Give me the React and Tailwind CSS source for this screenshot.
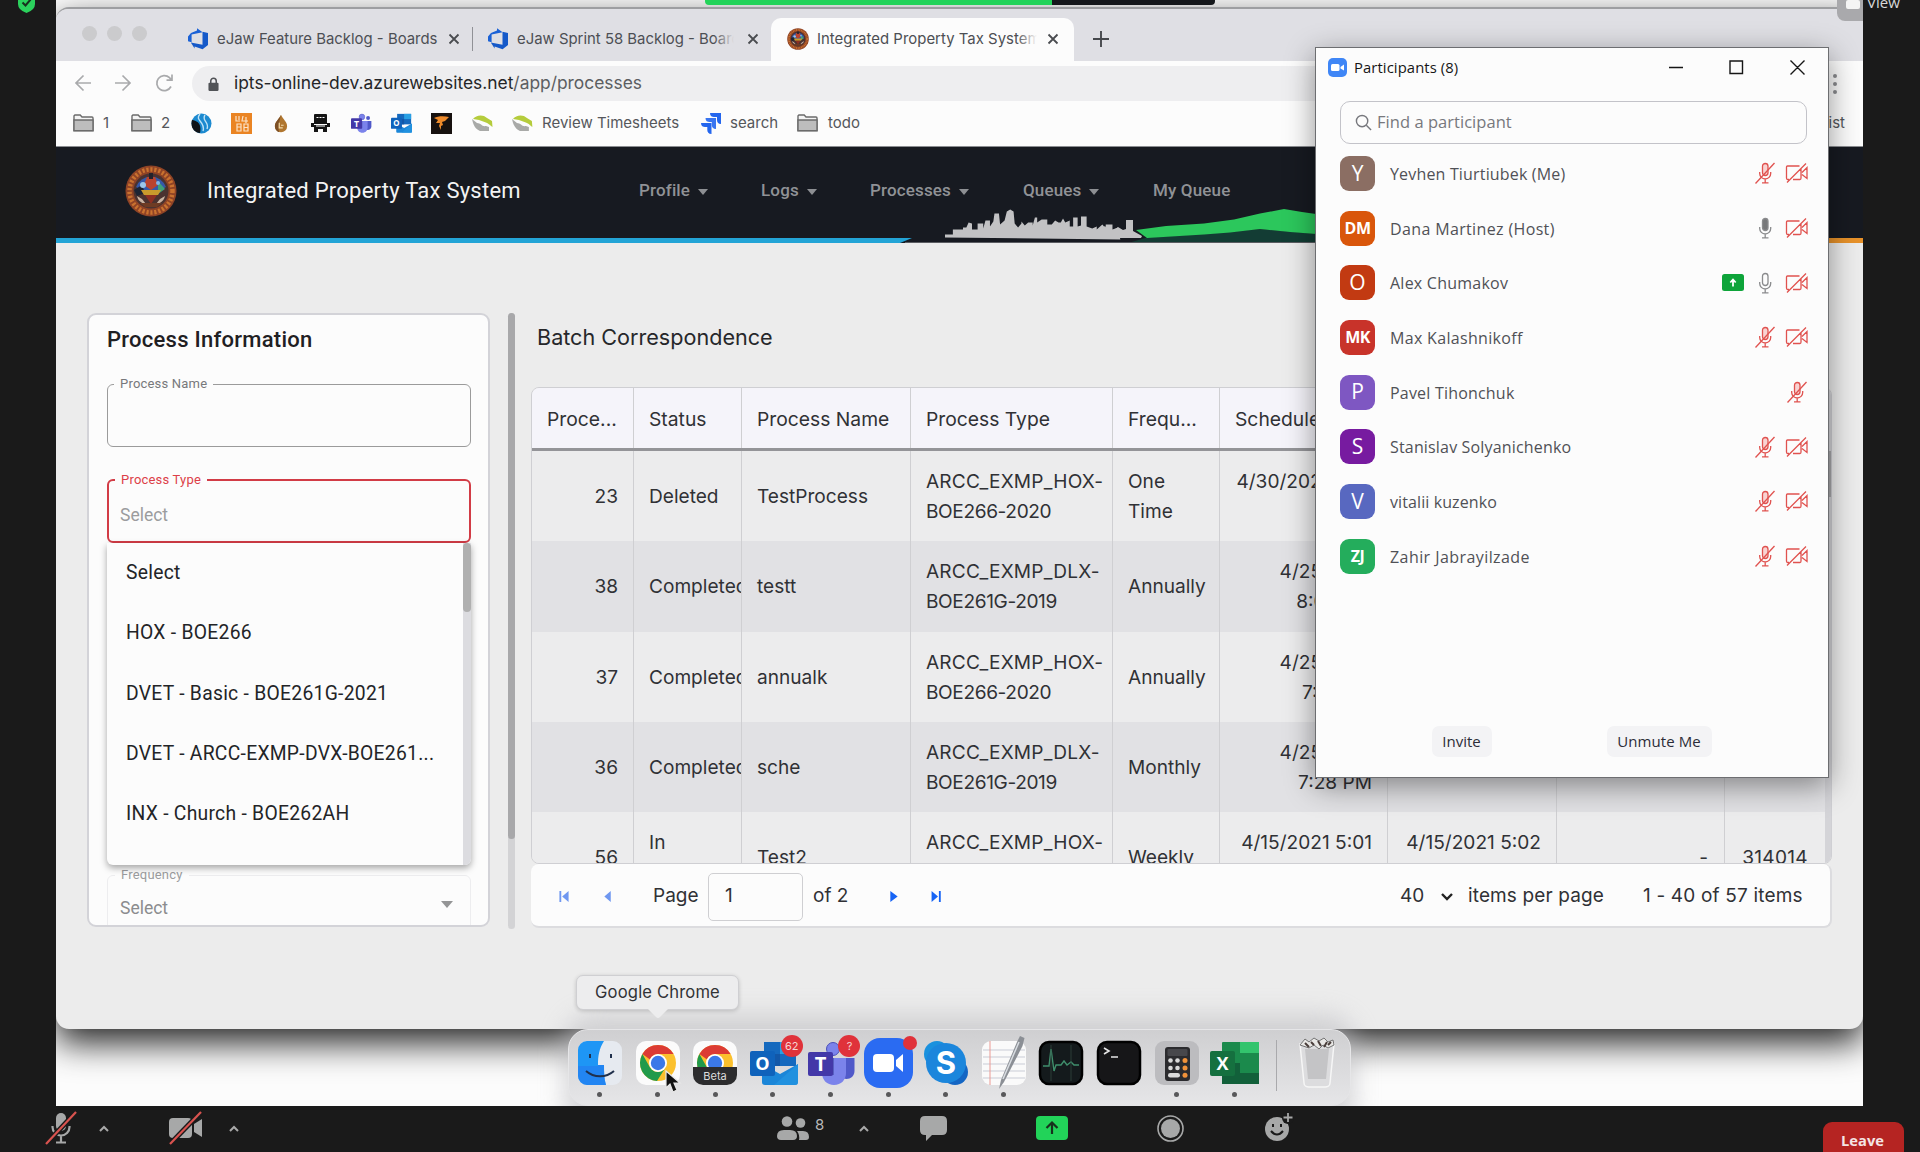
import React from "react";

/* ---------- small shared icons ---------- */

const Folder = () => (
  <svg width="21" height="18" viewBox="0 0 21 18">
    <path d="M1 16.5V2.200C1 1.500 1.400 1 2 1h5.200l1.800 2h10c.6 0 1 .5 1 1v12.500z" fill="#f4f4f4" stroke="#6b6b6b" strokeWidth="1.400" />
    <path d="M1 6h19v10.700H1z" fill="#bdbdbd" stroke="#6b6b6b" strokeWidth="1.400" />
  </svg>
);

const DevOps = () => (
  <svg width="22" height="22" viewBox="0 0 22 22">
    <path d="M1 8.500 4 5l6-2.600V.3l5.600 4-11 2.200v7.800L1 13.200z" fill="#1b62d6" />
    <path d="M15.500 3.800 21 5v12l-5.400 4.200-8-2.700v2L3.800 14.600l11.700 2.200z" fill="#1559c9" />
  </svg>
);

const CloseX = () => (
  <svg width="12" height="12" viewBox="0 0 12 12" stroke="#4a4c50" strokeWidth="1.800">
    <path d="M1.500 1.500l9 9M10.500 1.500l-9 9" />
  </svg>
);

const Seal = ({ size }) => (
  <svg width={size} height={size} viewBox="0 0 52 52">
    <circle cx="26" cy="26" r="25.500" fill="#8f4326" />
    <circle cx="26" cy="26" r="21.500" fill="none" stroke="#c9722f" strokeWidth="4.500" strokeDasharray="2.200 1.800" />
    <circle cx="26" cy="26" r="17.500" fill="#4a3230" />
    <path d="M11 22a16 16 0 0 1 30 0l-7 4H18z" fill="#3558a8" />
    <path d="M33 16l7 8-7 5z" fill="#3fa07a" />
    <path d="M9 25l8-5 3 8-8 3z" fill="#1c2434" />
    <path d="M22 12h8l3 8-7 5-7-5z" fill="#b9432f" />
    <path d="M24 8h4v6h-4z" fill="#23222c" />
    <path d="M16 25h20l-3 5H19z" fill="#c99a2c" />
    <path d="M12 31c2 12 26 12 28 0l-5 3-4 5h-10l-4-5z" fill="#c9b3a2" />
    <path d="M20 30h12l-6 9z" fill="#8d2f22" />
    <circle cx="18" cy="20" r="3" fill="#9cc6ea" />
    <circle cx="33" cy="18" r="2" fill="#7fb2e8" />
    <path d="M15 38h22l-5 4H20z" fill="#6e3b24" />
  </svg>
);

const Leaf = () => (
  <svg width="22" height="18" viewBox="0 0 22 18">
    <path d="M2 5c3-4 10-5 14-1l5 3 .5 6c-3-2-4-4-8-5L8 6z" fill="#b5cc3c" />
    <path d="M1 5l5 4c4 0 5 4 9 3l3 1 0 4H9C4 15 2 10 1 5z" fill="#a9aaa8" />
  </svg>
);

const TeamsIcon = ({ size }) => (
  <svg width={size} height={size} viewBox="0 0 48 44">
    <circle cx="25" cy="7" r="6.500" fill="#7b83eb" stroke="#4a4fb8" />
    <circle cx="39" cy="9.500" r="4.500" fill="#5059c9" />
    <path d="M32 16h14.500v13c0 5-4 8-8 8s-7-3-7-8z" fill="#5059c9" />
    <path d="M14 16h24v15c0 7-5 12-12 12s-12-5-12-12z" fill="#7b83eb" />
    <path d="M14 16h12v17H16z" fill="#4a50b0" opacity=".7" />
    <rect x="0" y="10" width="25" height="24" rx="2" fill="#4338a8" />
    <text x="12.500" y="29" fontSize="20" fontWeight="700" fill="#fff" textAnchor="middle" fontFamily="Open Sans, sans-serif">T</text>
  </svg>
);

const OutlookIcon = ({ size }) => (
  <svg width={size} height={size} viewBox="0 0 48 44">
    <rect x="14" y="0" width="32" height="24" fill="#1569be" />
    <rect x="30" y="0" width="16" height="12" fill="#28a0e4" />
    <rect x="14" y="12" width="16" height="12" fill="#1257a8" />
    <path d="M12 22l18 10 18-10v18c0 2-1 3-3 3H15c-2 0-3-1-3-3z" fill="#1b86d8" />
    <path d="M48 22v18c0 2-1 3-3 3H24z" fill="#2396e2" opacity=".7" />
    <rect x="0" y="9" width="25" height="25" rx="2" fill="#0f62bb" />
    <text x="12.500" y="28" fontSize="18" fontWeight="700" fill="#fff" textAnchor="middle" fontFamily="Open Sans, sans-serif">O</text>
  </svg>
);

const Jira = () => (
  <svg width="22" height="22" viewBox="0 0 22 22" fill="#2466ee">
    <path d="M10 1h11v11c-3 0-4-2-4-4V5h-3c-2 0-4-1-4-4z" />
    <path d="M5.500 6h10.500v11c-3 0-4.200-2-4.200-4v-3H9.500c-2 0-4-1-4-4z" opacity=".9" />
    <path d="M1 11h10.500v11c-3 0-4.200-2-4.200-4v-3H5c-2 0-4-1-4-4z" />
  </svg>
);

const CaretDown = () => (
  <svg width="10" height="6" viewBox="0 0 10 6"><path d="M0 0h10L5 6z" fill="#8d8f93" /></svg>
);

/* ---------- browser ---------- */

function TabStrip() {
  return (
    <div className="flex h-[52px] items-center bg-[#dfdfe4] text-[14.900px] text-[#4d4f54]">
      <div className="ml-[26px] flex w-[103px] gap-[10px] pb-[3px]">
        {[0, 1, 2].map((i) => (
          <span key={i} className="size-[15px] rounded-full bg-[#cbcbcd]" />
        ))}
      </div>
      <div className="flex w-[288px] items-center pl-[2px] pt-2">
        <DevOps />
        <span className="ml-[8px] w-[231px] whitespace-nowrap">eJaw Feature Backlog - Boards</span>
        <CloseX />
        <span className="ml-[12px] h-6 w-px bg-[#909196]" />
      </div>
      <div className="flex w-[298px] items-center pl-[14px] pt-2">
        <DevOps />
        <span className="relative ml-[8px] w-[217px] overflow-hidden whitespace-nowrap">
          eJaw Sprint 58 Backlog - Boards
          <span className="absolute inset-y-0 right-0 w-5 bg-gradient-to-r from-transparent to-[#dfdfe4]" />
        </span>
        <span className="ml-[13px]"><CloseX /></span>
      </div>
      <div className="flex h-[43px] w-[303px] items-center self-end rounded-t-[10px] bg-[#fcfcfc] pb-px pl-[16px]">
        <Seal size={22} />
        <span className="relative ml-[8px] w-[220px] overflow-hidden whitespace-nowrap tracking-[0.03px]">
          Integrated Property Tax System
          <span className="absolute inset-y-0 right-0 w-5 bg-gradient-to-r from-transparent to-[#fcfcfc]" />
        </span>
        <span className="ml-[10px]"><CloseX /></span>
      </div>
      <svg className="ml-[19px] mt-2" width="16" height="16" viewBox="0 0 16 16" stroke="#46484c" strokeWidth="1.900"><path d="M8 0v16M0 8h16" /></svg>
    </div>
  );
}

function AddressBar() {
  return (
    <div className="flex h-[45px] items-center bg-[#fcfcfc]">
      <svg className="-mt-px ml-[18px]" width="103" height="20" viewBox="0 0 103 20" fill="none" stroke="#a9aaac" strokeWidth="1.700">
        <path d="M17 10H2M9.500 2.500 2 10l7.500 7.500" />
        <path d="M41 10h15M48.500 2.500 56 10l-7.500 7.500" />
        <path d="M97 13.500A7.500 7.500 0 1 1 95.500 4.700l2 2.300M98 1.500v5.700h-5.500" />
      </svg>
      <div className="ml-[15px] flex h-[35px] flex-1 items-center rounded-l-full bg-[#eeeef0] pl-[16px]">
        <svg width="11" height="14" viewBox="0 0 12 15"><path d="M3 7V4.200a3 3 0 0 1 6 0V7" fill="none" stroke="#515357" strokeWidth="1.700" /><rect x=".5" y="6" width="11" height="9" rx="1.300" fill="#515357" /></svg>
        <span className="ml-[15px] whitespace-nowrap text-[17.400px] text-[#242527]">
          ipts-online-dev.azurewebsites.net<span className="text-[#5c5e62]">/app/processes</span>
        </span>
      </div>
      <div className="flex w-[43px] flex-col items-center gap-[4px] pr-[14px]">
        {[0, 1, 2].map((i) => <span key={i} className="size-[4px] rounded-full bg-[#8b8c8f]" />)}
      </div>
    </div>
  );
}

function Bookmarks() {
  return (
    <div className="flex h-[41px] items-center border-b border-[#8b8d91] bg-[#fcfcfc] pb-[6px] pl-[17px] text-[15px] text-[#55575b]">
      <Folder /><span className="ml-[9px] w-[28px]">1</span>
      <Folder /><span className="ml-[9px] w-[30px]">2</span>
      <div className="flex w-[342px] items-center">
        <span className="w-[40px]">
          <svg width="21" height="21" viewBox="0 0 21 21"><circle cx="10.500" cy="10.500" r="10" fill="#1c8ad0" /><path d="M1 7c5 1 10 3 8 13C3 20-1 14 1 7z" fill="#101418" /><path d="M9 1C3 8 15 8 12 18M14 2c-4 6 5 7 2 14" stroke="#bfe2f6" strokeWidth="1.400" fill="none" /></svg>
        </span>
        <span className="w-[43px]">
          <svg width="21" height="21" viewBox="0 0 21 21"><rect width="21" height="21" fill="#ea8423" /><g fill="none" stroke="#fbe3c8" strokeWidth="1.200"><path d="M5 3v5h4M8 3v4M12 3l-1 5h6M15 4v6M6 11h4v7H6zM6 14h4M13 11h4v7h-4zM13 14.500h4" /></g></svg>
        </span>
        <span className="w-[37px]">
          <svg width="14" height="19" viewBox="0 0 16 20"><path d="M8 0c2 5 7 8 7 13a7 7 0 0 1-14 0C1 8 6 5 8 0z" fill="#b0762f" /><path d="M8 0c-2 5-7 8-7 13 0 3 2 6 5 7C4 14 6 8 8 0z" fill="#7d5026" /><path d="M6 9v6h4M8 12h3" stroke="#f2dcae" strokeWidth="1.300" fill="none" /></svg>
        </span>
        <span className="w-[41px]">
          <svg width="21" height="20" viewBox="0 0 21 20" fill="#151515"><path d="M4 2q0-1 1-1h11q1 0 1 1v9H4z" /><path d="M1 10h3v2h13v-2h3v4h-3v5h-4v-3H8v3H4v-5H1z" /><path d="M6.500 4.500h2M9.500 4.500h2M12.500 4.500h2M6 13h9" stroke="#fff" /></svg>
        </span>
        <span className="w-[40px]"><TeamsIcon size={21} /></span>
        <span className="w-[40px]"><OutlookIcon size={21} /></span>
        <span className="w-[41px]">
          <svg width="21" height="21" viewBox="0 0 21 21"><rect width="21" height="21" fill="#17110f" /><path d="M3 5c4-2 10-2 15-1l-4 4-3 1 1 3-2 1 0 4-2-4 1-3-4 0 2-3z" fill="#ee8a2a" /></svg>
        </span>
        <span className="w-[40px]"><Leaf /></span>
        <Leaf />
      </div>
      <span className="ml-[9px] w-[158px] whitespace-nowrap">Review Timesheets</span>
      <Jira /><span className="ml-[8px] w-[67px]">search</span>
      <Folder /><span className="ml-[10px]">todo</span>
      <span className="ml-auto mr-[18px]">Reading list</span>
    </div>
  );
}

const NAV = [
  ["Profile", "w-[122px]", true],
  ["Logs", "w-[109px]", true],
  ["Processes", "w-[153px]", true],
  ["Queues", "w-[130px]", true],
  ["My Queue", "w-[100px]", false],
];

function SiteHeader() {
  return (
    <div className="relative flex h-[96px] items-start bg-[#171a21] font-['Roboto',sans-serif]">
      <div className="flex h-[88px] items-center pl-[69px]">
        <Seal size={52} />
        <span className="ml-[30px] w-[432px] whitespace-nowrap pb-[2px] text-[22px] tracking-[0.240px] text-[#f3f3f3]">Integrated Property Tax System</span>
        {NAV.map(([label, w, caret]) => (
          <span key={label} className={`flex items-center whitespace-nowrap text-[17px] font-medium tracking-[0.150px] text-[#909296] ${w}`}>
            {label}
            {caret && <span className="ml-[8px] pt-0.5"><CaretDown /></span>}
          </span>
        ))}
      </div>
      <svg className="absolute bottom-0 left-0" width="1807" height="36" viewBox="56 206 1807 36">
        <path d="M56 237H912l-12 5H56z" fill="#23a4d6" />
        <path d="M1128 242l19-5.500 57-3.500 56-5 56 5v9z" fill="#133c34" />
        <path d="M1136 229l30-4 38-2.500 30-4 26-6 24-4.500 18 3 14 2v20l-26-2-30-3-30 3.500-26 2-57 3.500z" fill="#2cc75c" />
        <g transform="translate(945 0) scale(1.124 1) translate(-945 0)">
          <path d="M945 236.500v-3h7v-5h9v-2h3l2-5 3 1v6h5v-6h5v5l2-8h4v6l3-5 1-8h4l1 11 4-4 2-9 3-2 3 2 1 12 3 4 3-4v-2l3 4 3-3h4v3l2-8h2v5l4-3h5v5h4l3-4 3 2h2l2-4 2 4 4-2v6h3v-9h4v9l3-1v-9h5v10l5 2 4-2v3l5-5 3 4v-4h6v5l5-2v3l2 9z" fill="#c2c2c4" />
        </g>
        <path d="M1100 237v-8l5-4 3 4h6l4-3 5 3 3-1v-9h7v11l9 5-1 2z" fill="#c2c2c4" />
        <path d="M1800 237h63v5h-63z" fill="#e8922a" />
        <path d="M905 241h895v1H905z" fill="#5b5d62" />
      </svg>
    </div>
  );
}

/* ---------- process form ---------- */

const OPTIONS = ["Select", "HOX - BOE266", "DVET - Basic - BOE261G-2021", "DVET - ARCC-EXMP-DVX-BOE261...", "INX - Church - BOE262AH"];

function ProcessForm() {
  return (
    <div className="relative h-[614px] w-[403px] overflow-hidden rounded-[9px] border-2 border-[#d3d3d8] bg-[#fcfcfc] pl-[18px] font-['Roboto',sans-serif]">
      <h2 className="mt-[9px] h-[32px] whitespace-nowrap text-[22px] font-medium leading-[32px] tracking-[0.260px] text-[#1f2023]">Process Information</h2>
      <fieldset className="mt-[20px] h-[71px] w-[364px] rounded-[6px] border-[1.500px] border-[#9b9b9b] pl-[6px]">
        <legend className="px-[6px] text-[13px] leading-[16px] tracking-[0.200px] text-[#77787b]">Process Name</legend>
      </fieldset>
      <fieldset className="mt-[25px] h-[71px] w-[364px] rounded-[6px] border-2 border-[#d23c46] pl-[6px]">
        <legend className="px-[6px] text-[13px] leading-[16px] tracking-[0.200px] text-[#dc3f48]">Process Type</legend>
        <div className="pl-[5px] pt-[15px] text-[17.500px] leading-[24px] text-[#9b9c9e]">Select</div>
      </fieldset>
      <fieldset className="mt-[324px] h-[90px] w-[364px] rounded-[6px] border border-[#ededef] pl-[7px]">
        <legend className="px-[6px] text-[13px] leading-[16px] tracking-[0.200px] text-[#9b9c9e]">Frequency</legend>
        <div className="flex items-center pl-[5px] pr-[17px] pt-[13px] text-[17.500px] leading-[24px] text-[#8b8c8e]">
          <span className="flex-1">Select</span>
          <span className="pb-2"><svg width="12" height="7" viewBox="0 0 12 7"><path d="M0 0h12L6 7z" fill="#949596" /></svg></span>
        </div>
      </fieldset>
      <ul className="absolute left-[18px] top-[228px] flex h-[322px] w-[364px] flex-col rounded-b-[6px] bg-[#fcfcfc] pl-[19px] shadow-[0_3px_7px_rgba(0,0,0,0.35)]">
        {OPTIONS.map((o) => (
          <li key={o} className="h-[60.300px] w-[325px] whitespace-nowrap text-[19.300px] leading-[60px] tracking-[0.280px] text-[#232427]">{o}</li>
        ))}
        <span className="absolute right-0 top-0 flex h-full w-[8px] rounded-br-[6px] bg-[#dcdce0]">
          <span className="h-[69px] w-full rounded-[4px] bg-[#b0b0b0]" />
        </span>
      </ul>
    </div>
  );
}

/* ---------- data grid ---------- */

const ROWS = [
  ["23", "Deleted", "TestProcess", ["HOX-", "BOE266-2020"], "One\nTime", "4/30/2021 5:14\n\u00a0"],
  ["38", "Completed", "testt", ["DLX-", "BOE261G-2019"], "Annually", "4/25/2021\n8:02 PM"],
  ["37", "Completed", "annualk", ["HOX-", "BOE266-2020"], "Annually", "4/25/2021\n7:31 PM"],
  ["36", "Completed", "sche", ["DLX-", "BOE261G-2019"], "Monthly", "4/25/2021\n7:28 PM"],
  ["56", "In\nProgress", "Test2", ["HOX-", "BOE266-2020"], "Weekly", "4/15/2021 5:01\nPM", "4/15/2021 5:02\nPM", "-", "314014"],
];
const COLS = "grid grid-cols-[102px_108px_169px_202px_107px_168px_169px_168px_100px]";
const CELL = "flex min-w-0 items-center overflow-hidden whitespace-pre border-r border-[#cfcfd2] pl-[15px]";
const HEADS = ["Proce...", "Status", "Process Name", "Process Type", "Frequ...", "Schedule Date", "Start Date", "End Date", "Count"];

function Grid() {
  return (
    <div className="flex h-[477px] w-[1301px] overflow-hidden rounded-[8px] border border-[#cfcfd3] text-[19.100px] text-[#303135]">
      <div className="w-[1293px]">
        <div className={`${COLS} h-[63px] border-b-[3px] border-[#949498] bg-[#f5f4fa] text-[19.300px]`}>
          {HEADS.map((h) => <div key={h} className={`${CELL} pt-[2px]`}>{h}</div>)}
        </div>
        {ROWS.map((r, i) => (
          <div key={i} className={`${COLS} h-[90.300px] leading-[30px] ${i % 2 ? "bg-[#e1e1e4]" : "bg-[#ececed]"}`}>
            <div className={`${CELL} justify-end pr-[15px]`}>{r[0]}</div>
            <div className={CELL}>{r[1]}</div>
            <div className={CELL}>{r[2]}</div>
            <div className={CELL}>
              <div>
                <div className="tracking-[0.200px]">{"ARCC_EXMP_" + r[3][0]}</div>
                <div className="tracking-[-0.380px]">{r[3][1]}</div>
              </div>
            </div>
            <div className={CELL}>{r[4]}</div>
            <div className={`${CELL} justify-end pr-[15px] text-right`}>{r[5]}</div>
            <div className={`${CELL} justify-end pr-[15px] text-right`}>{r[6]}</div>
            <div className={`${CELL} justify-end pr-[16px]`}>{r[7]}</div>
            <div className="flex items-center justify-end pr-[17px] tracking-[0.300px]">{r[8]}</div>
          </div>
        ))}
      </div>
      <div className="flex-1 bg-[#d4d4d8] pt-[63px]"><div className="h-[46px] bg-[#a9a9ab]" /></div>
    </div>
  );
}

function Pager() {
  return (
    <div className="flex h-[64px] w-[1301px] items-center rounded-[8px] border-b-2 border-r-2 border-[#dcdcdf] bg-[#fcfcfc] pt-[3px] text-[19px] text-[#303135]">
      <svg className="ml-[26px]" width="58" height="11" viewBox="0 0 58 12" fill="#6f97f0"><path d="M0 0h2v12H0zM10 0v12L3 6zM56 0v12l-7-6z" /></svg>
      <span className="ml-[38px] w-[55px]">Page</span>
      <span className="flex h-[48px] w-[95px] items-center rounded-[5px] border border-[#cfcfd2] pl-[16px]">1</span>
      <span className="ml-[10px] w-[75px]">of 2</span>
      <svg width="56" height="11" viewBox="0 0 56 12" fill="#1764f5"><path d="M0 0v12l8-6zM45 0v12l7-6zM53 0h2v12h-2z" /></svg>
      <span className="ml-auto w-[41px]">40</span>
      <svg width="12" height="8" viewBox="0 0 12 8" fill="none" stroke="#222" strokeWidth="2.400"><path d="M1 1l5 5 5-5" /></svg>
      <span className="ml-[15px] w-[175px] whitespace-nowrap tracking-[0.130px]">items per page</span>
      <span className="w-[187px] whitespace-nowrap tracking-[0.180px]">1 - 40 of 57 items</span>
    </div>
  );
}

/* ---------- participants ---------- */

const PEOPLE = [
  ["Y", "bg-[#8b6e63]", "Yevhen Tiurtiubek (Me)", "tracking-[0.170px]", ["micoff", "vidoff"]],
  ["DM", "bg-[#d9560b]", "Dana Martinez (Host)", "tracking-[0.360px]", ["micfull", "vidoff"]],
  ["O", "bg-[#c23a12]", "Alex Chumakov", "tracking-[0.240px]", ["share", "mic", "vidoff"]],
  ["MK", "bg-[#c8332a]", "Max Kalashnikoff", "tracking-[0.320px]", ["micoff", "vidoff"]],
  ["P", "bg-[#7e57c2]", "Pavel Tihonchuk", "tracking-[0.200px]", ["micoff"]],
  ["S", "bg-[#771ba0]", "Stanislav Solyanichenko", "tracking-[0.170px]", ["micoff", "vidoff"]],
  ["V", "bg-[#5868c0]", "vitalii kuzenko", "tracking-[0.100px]", ["micoff", "vidoff"]],
  ["ZJ", "bg-[#24ad5c]", "Zahir Jabrayilzade", "tracking-[0.430px]", ["micoff", "vidoff"]],
];

function StatusIcon({ kind }) {
  if (kind === "share")
    return (
      <svg className="mr-[1px]" width="22" height="17" viewBox="0 0 22 17"><rect width="22" height="17" rx="2.500" fill="#0ea43a" /><path d="M11 12.500V6.500M8.300 8.500 11 5.500l2.700 3" stroke="#fff" strokeWidth="1.800" fill="none" /></svg>
    );
  if (kind === "vidoff")
    return (
      <svg width="23" height="22" viewBox="0 0 23 22" fill="none" stroke="#e0524f" strokeWidth="1.300"><path d="M14.500 4H2.500Q1.500 4 1.500 5v11q0 1.500 1 1.500H4M8 17.500h7q1 0 1-1.500V7M17 10.500l5-5v11l-5-4M2 20.500 21 1.500" /></svg>
    );
  const off = kind === "micoff";
  return (
    <svg width="22" height="22" viewBox="0 0 22 22" fill="none" stroke={off ? "#e0524f" : "#8a8b8d"} strokeWidth="1.300">
      <rect x="8.500" y="1.500" width="5.500" height="12" rx="2.750" fill={kind === "micfull" ? "#77787a" : off ? "#f8d3d2" : "none"} />
      <path d="M5.700 10v1.500a5.500 5.500 0 0 0 11 0V10M11.200 17v3.500M8 20.800h6.500" />
      {off && <path d="M1.500 21.500 20.500 1" stroke="#e0524f" />}
    </svg>
  );
}

function Participants() {
  return (
    <div className="absolute left-[1315px] top-[47px] flex h-[731px] w-[514px] flex-col border border-[#6d6e71] bg-[#fcfcfc] font-['Open_Sans',sans-serif] shadow-[0_8px_28px_rgba(0,0,0,0.42)]">
      <div className="flex h-[38px] items-center pl-[12px] text-[14.800px] text-[#161616]">
        <svg width="19" height="19" viewBox="0 0 19 19"><rect width="19" height="19" rx="5" fill="#3f86f6" /><rect x="3" y="6" width="8.500" height="7" rx="1.500" fill="#fff" /><path d="M12.500 9 16 6.500v6L12.500 10.500z" fill="#fff" /></svg>
        <span className="ml-[7px] flex-1 whitespace-nowrap tracking-[0.100px]">Participants (8)</span>
        <svg className="mr-[23px]" width="137" height="15" viewBox="0 0 137 15" fill="none" stroke="#161616" strokeWidth="1.400"><path d="M1 7.500h14M62 1h12.500v12.500H62zM122.500 .5l14 14M136.500 .5l-14 14" /></svg>
      </div>
      <div className="ml-[24px] mt-[15px] flex h-[43px] w-[467px] items-center rounded-[10px] border-[1.500px] border-[#c3c3c9] pl-[14px] text-[16.500px] text-[#77787d]">
        <svg width="17" height="17" viewBox="0 0 18 18" fill="none" stroke="#77787d" strokeWidth="1.500"><circle cx="7.500" cy="7.500" r="6" /><path d="M12 12l5 5" /></svg>
        <span className="ml-[5px] whitespace-nowrap pb-px tracking-[0.040px]">Find a participant</span>
      </div>
      <div className="mt-[2px]">
        {PEOPLE.map(([ini, bg, name, track, icons]) => (
          <div key={name} className="flex h-[54.700px] items-center pl-[24px] pr-[20px]">
            <span className={`flex h-[35px] w-[35px] items-center justify-center rounded-[9px] text-white ${bg} ${ini.length > 1 ? "text-[16px] font-bold tracking-[-0.500px]" : "text-[21px] font-medium"}`}>{ini}</span>
            <span className={`ml-[15px] flex-1 whitespace-nowrap pt-px text-[16px] text-[#505156] ${track}`}>{name}</span>
            <span className="flex items-center gap-[9px]">{icons.map((k) => <StatusIcon key={k} kind={k} />)}</span>
          </div>
        ))}
      </div>
      <div className="mt-[142px] flex text-[15px] text-[#2c2d38]">
        <span className="ml-[116px] flex h-[31px] w-[60px] items-center justify-center rounded-[7px] bg-[#f3f3f5] pr-px">Invite</span>
        <span className="ml-[115px] flex h-[31px] w-[105px] items-center justify-center whitespace-nowrap rounded-[7px] bg-[#f3f3f5] pr-px tracking-[0.100px]">Unmute Me</span>
      </div>
    </div>
  );
}

/* ---------- dock ---------- */

const ChromeMark = () => (
  <g>
    <circle cx="23" cy="23" r="18" fill="#fbc02d" />
    <path d="M7.400 14A18 18 0 0 0 22 41l8.500-13.500a9 9 0 0 1-15.500 0z" fill="#219a4b" />
    <path d="M7.400 14A18 18 0 0 1 38.600 14H23a9 9 0 0 0-8 5.500z" fill="#dc3b34" />
    <circle cx="23" cy="23" r="9" fill="#fff" /><circle cx="23" cy="23" r="7.200" fill="#3b78e8" />
  </g>
);

const APPS = [
  ["finder", true, <g key="a"><rect x="1" y="1" width="44" height="44" rx="9" fill="#e6eaf0" /><path d="M10 1h17c-5 8-6 15-6 24h6c0 7 0 14 2 20H10a9 9 0 0 1-9-9V10a9 9 0 0 1 9-9z" fill="#1e96f5" /><path d="M1 26h20v-1h6c0 7 0 14 2 20H10a9 9 0 0 1-9-9z" fill="#2579f0" opacity=".6" /><path d="M13 14v4M34 14v4M9 31c8 7 20 7 28 0" stroke="#20304c" strokeWidth="2" fill="none" /></g>],
  ["chrome", true, <g key="a"><rect x="1" y="1" width="44" height="44" rx="10" fill="#fbfbfb" /><ChromeMark /></g>],
  ["beta", true, <g key="a"><rect x="1" y="1" width="44" height="44" rx="10" fill="#fbfbfb" /><ChromeMark /><path d="M1 27h44v8a10 10 0 0 1-10 10H11A10 10 0 0 1 1 35z" fill="#2c2c2e" /><text x="23" y="40" fontSize="11" fill="#ddd" textAnchor="middle">Beta</text></g>],
  ["outlook", true, <OutlookIcon key="a" size={48} />],
  ["teams", true, <TeamsIcon key="a" size={48} />],
  ["zoom", true, <g key="a"><rect x="-1" y="-2" width="49" height="50" rx="16" fill="#2a6bf2" /><rect x="8" y="14" width="21" height="18" rx="4" fill="#fff" /><path d="M31 20l7-6v18l-7-6z" fill="#fff" /></g>],
  ["skype", true, <g key="a"><circle cx="14" cy="14" r="13" fill="#1a91de" /><circle cx="32" cy="32" r="13" fill="#1466c4" /><circle cx="23" cy="23" r="20" fill="#1b86dc" /><text x="23" y="34" fontSize="31" fontWeight="700" fill="#fff" textAnchor="middle">S</text></g>],
  ["notes", true, <g key="a"><rect x="1" y="1" width="44" height="44" rx="9" fill="#fafafa" /><path d="M2 10h42M2 17h42M2 24h42M2 31h42M2 38h42" stroke="#c9ccd6" /><path d="M9 1v44" stroke="#eb9a94" /><path d="M39-4l4.500 2-2 8L23 42l-5 7 2-9L36 2z" fill="#8b8f95" /><path d="M38 2 22 39" stroke="#d9dde2" strokeWidth="1.500" /></g>],
  ["activity", false, <g key="a"><rect x="2" y="2" width="42" height="42" rx="9" fill="#141a1c" stroke="#000" strokeWidth="2.500" /><path d="M5 26h6l2-17 3 22 2-6h5l3-4 3 4 4-3 3 3h5" stroke="#3f8f6c" strokeWidth="1.400" fill="none" /><path d="M13 5v36M33 5v36" stroke="#31463f" strokeWidth=".8" /></g>],
  ["terminal", false, <g key="a"><rect x="2" y="2" width="42" height="42" rx="9" fill="#161618" stroke="#000" strokeWidth="2.500" /><path d="M8 8l5 3-5 3M15 17h7" stroke="#e6e6e6" strokeWidth="1.600" fill="none" /></g>],
  ["calculator", true, <g key="a"><rect x="1" y="1" width="44" height="44" rx="9" fill="#bcbcbf" /><rect x="11" y="7" width="25" height="34" rx="3" fill="#2b2b2e" /><rect x="13.500" y="9" width="20" height="7" rx="1" fill="#47474b" />{[20.500, 28].map((y) => <g key={y}><circle cx="16.500" cy={y} r="2.300" fill="#dadada" /><circle cx="23.500" cy={y} r="2.300" fill="#dadada" /><circle cx="31" cy={y} r="2.500" fill="#f0923a" /></g>)}<rect x="14" y="33" width="12" height="4.600" rx="2.300" fill="#dadada" /><circle cx="31" cy="35.300" r="2.500" fill="#f0923a" /></g>],
  ["excel", true, <g key="a"><rect x="11" y="2" width="37" height="42" rx="1" fill="#1b8a4c" /><path d="M29 2h19v11H29z" fill="#33c46d" /><path d="M11 23h18v10H11zM29 33h19v11H11V33z" fill="#12603a" /><rect x="-1" y="11" width="25" height="25" rx="2" fill="#15703f" /><text x="11.500" y="30" fontSize="18" fontWeight="700" fill="#fff" textAnchor="middle" fontFamily="Open Sans, sans-serif">X</text></g>],
];
const BADGES = { outlook: "62", teams: "?", zoom: "" };

function Dock() {
  return (
    <div className="absolute left-[568px] top-[1029px] flex h-[77px] w-[783px] rounded-[20px] border border-[#e6e6e8] bg-gradient-to-b from-[#cfcfd1] to-[#e6e6e8] pl-[2px] pt-[10px]">
      {APPS.map(([id, dot, art]) => (
        <div key={id} className="relative flex w-[57.700px] flex-col items-center">
          <svg className="overflow-visible" width="46" height="46" viewBox="0 0 46 46" fontFamily="Inter, sans-serif">{art}</svg>
          {dot && <span className="mt-[6px] size-[5px] rounded-full bg-[#58585a]" />}
          {id in BADGES && (
            <span className={`absolute flex items-center justify-center rounded-full bg-[#e0323a] text-[11px] text-[#f6d4d4] ${BADGES[id] ? "-top-[5px] right-[-1px] size-[22px]" : "-top-[4px] right-0 size-[14px]"}`}>{BADGES[id]}</span>
          )}
        </div>
      ))}
      <span className="ml-[13px] h-[51px] w-px bg-[#a9a9ac]" />
      <svg className="-mt-1 ml-[20px]" width="40" height="54" viewBox="0 0 40 54">
        <path d="M3 8h34l-4 39c0 3-3 4-5 4H12c-2 0-5-1-5-4z" fill="#dcdcde" stroke="#f6f6f6" strokeWidth="1.500" />
        <path d="M8 13h24l-3 30H11z" fill="#c4c4c6" />
        <path d="M3 9l5-6 4 3 5-4 5 3 5-3 4 4 5-2 1 5-6 3-5-3-4 4-5-4-5 3z" fill="#e9e8e6" stroke="#747474" />
        <path d="M8 7l4 4M21 5l3 5M30 6l-3 5M14 6l3 3M34 6l-3 3" stroke="#493d3a" strokeWidth="2" />
      </svg>
    </div>
  );
}

function DockTooltip() {
  return (
    <div className="absolute left-[576px] top-[975px] flex h-[35px] w-[163px] items-center justify-center rounded-[7px] border border-[#cfcfd2] bg-[#ededee] pb-px text-[16.600px] tracking-[0.150px] text-[#323336] shadow-[0_1px_4px_rgba(0,0,0,0.18)]">
      Google Chrome
      <svg className="absolute left-[71px] top-[33px]" width="20" height="11" viewBox="0 0 20 11"><path d="M0 0h20l-8 8q-2 2-4 0z" fill="#ededee" /></svg>
    </div>
  );
}

/* ---------- meeting toolbar ---------- */

const Up = () => <svg width="10" height="7" viewBox="0 0 10 7" fill="none" stroke="#a9a9a9" strokeWidth="2"><path d="M1 6l4-4 4 4" /></svg>;

function MeetingBar() {
  return (
    <div className="flex h-[46px] items-start overflow-hidden bg-[#1a1a1a]">
      <div className="flex h-[44px] w-full items-center pl-[44px]">
        <svg width="34" height="34" viewBox="0 0 34 34"><rect x="12" y="2" width="10" height="18" rx="5" fill="#a7a8a8" /><path d="M8.500 15v1a8.500 8.500 0 0 0 17 0v-1M17 25v6M12 31.500h10" stroke="#a7a8a8" strokeWidth="2.200" fill="none" /><path d="M2 33 32 1" stroke="#1a1a1a" strokeWidth="5" /><path d="M2 33 32 1" stroke="#d9534f" strokeWidth="2.200" /></svg>
        <span className="ml-[21px] w-[70px]"><Up /></span>
        <svg width="34" height="34" viewBox="0 0 34 34"><rect x="0" y="7" width="23" height="20" rx="4" fill="#a7a8a8" /><path d="M25 13l8-5v18l-8-5z" fill="#a7a8a8" /><path d="M1 33 32 1" stroke="#1a1a1a" strokeWidth="5" /><path d="M1 33 32 1" stroke="#d9534f" strokeWidth="2.200" /></svg>
        <span className="ml-[26px] w-[548px]"><Up /></span>
        <svg width="33" height="24" viewBox="0 0 33 24" fill="#a7a8a8"><circle cx="10" cy="5.500" r="5.300" /><circle cx="23.500" cy="7" r="4.800" /><path d="M0 20q0-6 7-6h6q7 0 7 6 0 4-4 4H4q-4 0-4-4zM22 24q1-5-2-9h6q6 0 6 6 0 3-3 3z" /></svg>
        <span className="ml-[5px] w-[44px] pb-1.5 text-[15px] text-[#b9b9b9]">8</span>
        <span className="w-[61px]"><Up /></span>
        <svg width="27" height="25" viewBox="0 0 27 25" fill="#a7a8a8"><path d="M5 0h17q5 0 5 5v9q0 5-5 5H12l-6 6v-6H5q-5 0-5-5V5q0-5 5-5z" /></svg>
        <svg className="ml-[89px]" width="32" height="24" viewBox="0 0 32 24"><rect width="32" height="24" rx="4" fill="#22d359" /><path d="M16 18V7.500M10.500 12 16 6.500l5.500 5.500" stroke="#17301d" strokeWidth="2.200" fill="none" /></svg>
        <svg className="ml-[89px]" width="27" height="27" viewBox="0 0 27 27"><circle cx="13.500" cy="13.500" r="12.500" fill="none" stroke="#a7a8a8" strokeWidth="1.600" /><circle cx="13.500" cy="13.500" r="9.500" fill="#a7a8a8" /></svg>
        <svg className="mb-[3px] ml-[80px]" width="30" height="30" viewBox="0 0 30 30"><circle cx="13" cy="17" r="12" fill="#a7a8a8" /><path d="M7 19q6 7 12 0M9 12v3M17 12v3" stroke="#1a1a1a" strokeWidth="2" fill="none" /><circle cx="24" cy="6" r="6" fill="#1a1a1a" /><path d="M24 1v9M19.500 5.500h9" stroke="#a7a8a8" strokeWidth="1.800" /></svg>
      </div>
      <div className="mr-[16px] mt-[16px] flex h-[44px] w-[81px] shrink-0 justify-center rounded-[9px] bg-[#b52422] pr-[2px] pt-[7px] font-['Open_Sans',sans-serif] text-[14.700px] font-bold text-[#f4e4e4]">Leave</div>
    </div>
  );
}

export default function App() {
  return (
    <div className="relative flex h-[1152px] w-[1920px] flex-col overflow-hidden bg-[#1a1a1a] font-['Inter',sans-serif]">
      <div className="flex h-[1106px]">
        <div className="flex w-[56px] justify-center">
          <svg className="-mt-[6px] ml-[-3px]" width="17" height="19" viewBox="0 0 17 19"><path d="M8.500 0 17 3v7q0 6-8.500 9Q0 16 0 10V3z" fill="#2bd15c" /><path d="M4.500 8.500l3 3 5-6" stroke="#17301d" strokeWidth="2" fill="none" /></svg>
        </div>
        <div className="w-[1807px] overflow-hidden bg-[#fcfcfc]">
          <div className="flex h-[7px] pl-[649px]">
            <span className="h-[5px] w-[347px] rounded-bl-[4px] bg-[#22d359]" />
            <span className="h-[5px] w-[163px] rounded-br-[4px] bg-[#15171b]" />
          </div>
          <div className="h-[1022px] overflow-hidden rounded-[13px] border-t-2 border-[#9d9ea1] bg-[#ececec] shadow-[0_14px_34px_0px_rgba(0,0,0,0.85)]">
            <TabStrip />
            <AddressBar />
            <Bookmarks />
            <SiteHeader />
            <div className="flex pl-[31px] pt-[70px]">
              <ProcessForm />
              <div className="ml-[18px] h-[616px] w-[7px] rounded-full bg-[#d3d3d5]"><div className="h-[526px] rounded-full bg-[#a8a8aa]" /></div>
              <div className="ml-[16px]">
                <h1 className="h-[74px] pl-[6px] pt-[8px] text-[21.600px] leading-[32px] text-[#26272a]">Batch Correspondence</h1>
                <Grid />
                <Pager />
              </div>
            </div>
          </div>
        </div>
        <div className="relative flex-1">
          <div className="absolute -left-[26px] top-0 h-[21px] w-[26px] rounded-bl-[8px] bg-[#a9a9ac]"><span className="ml-[9px] block h-[9px] w-[14px] rounded-[2px] bg-[#f4f4f4]" /></div>
          <span className="absolute left-[4px] top-[-8px] font-['Open_Sans',sans-serif] text-[15px] leading-[20px] text-[#d8d8d8]">View</span>
        </div>
      </div>
      <MeetingBar />
      <div className="absolute left-[528px] top-[985px] h-[121px] w-[863px] overflow-hidden px-[36px] pt-[30px]">
        <div className="h-[120px] rounded-[30px] bg-[#bdbdc1] opacity-60 blur-[12px]" />
      </div>
      <Dock />
      <DockTooltip />
      <svg className="absolute left-[665px] top-[1070px]" width="18" height="24" viewBox="0 0 18 24"><path d="M1 1v17l4-4 3 8 4-2-3-7h6z" fill="#111" stroke="#e8e8e8" strokeWidth="1.200" /></svg>
      <Participants />
    </div>
  );
}
